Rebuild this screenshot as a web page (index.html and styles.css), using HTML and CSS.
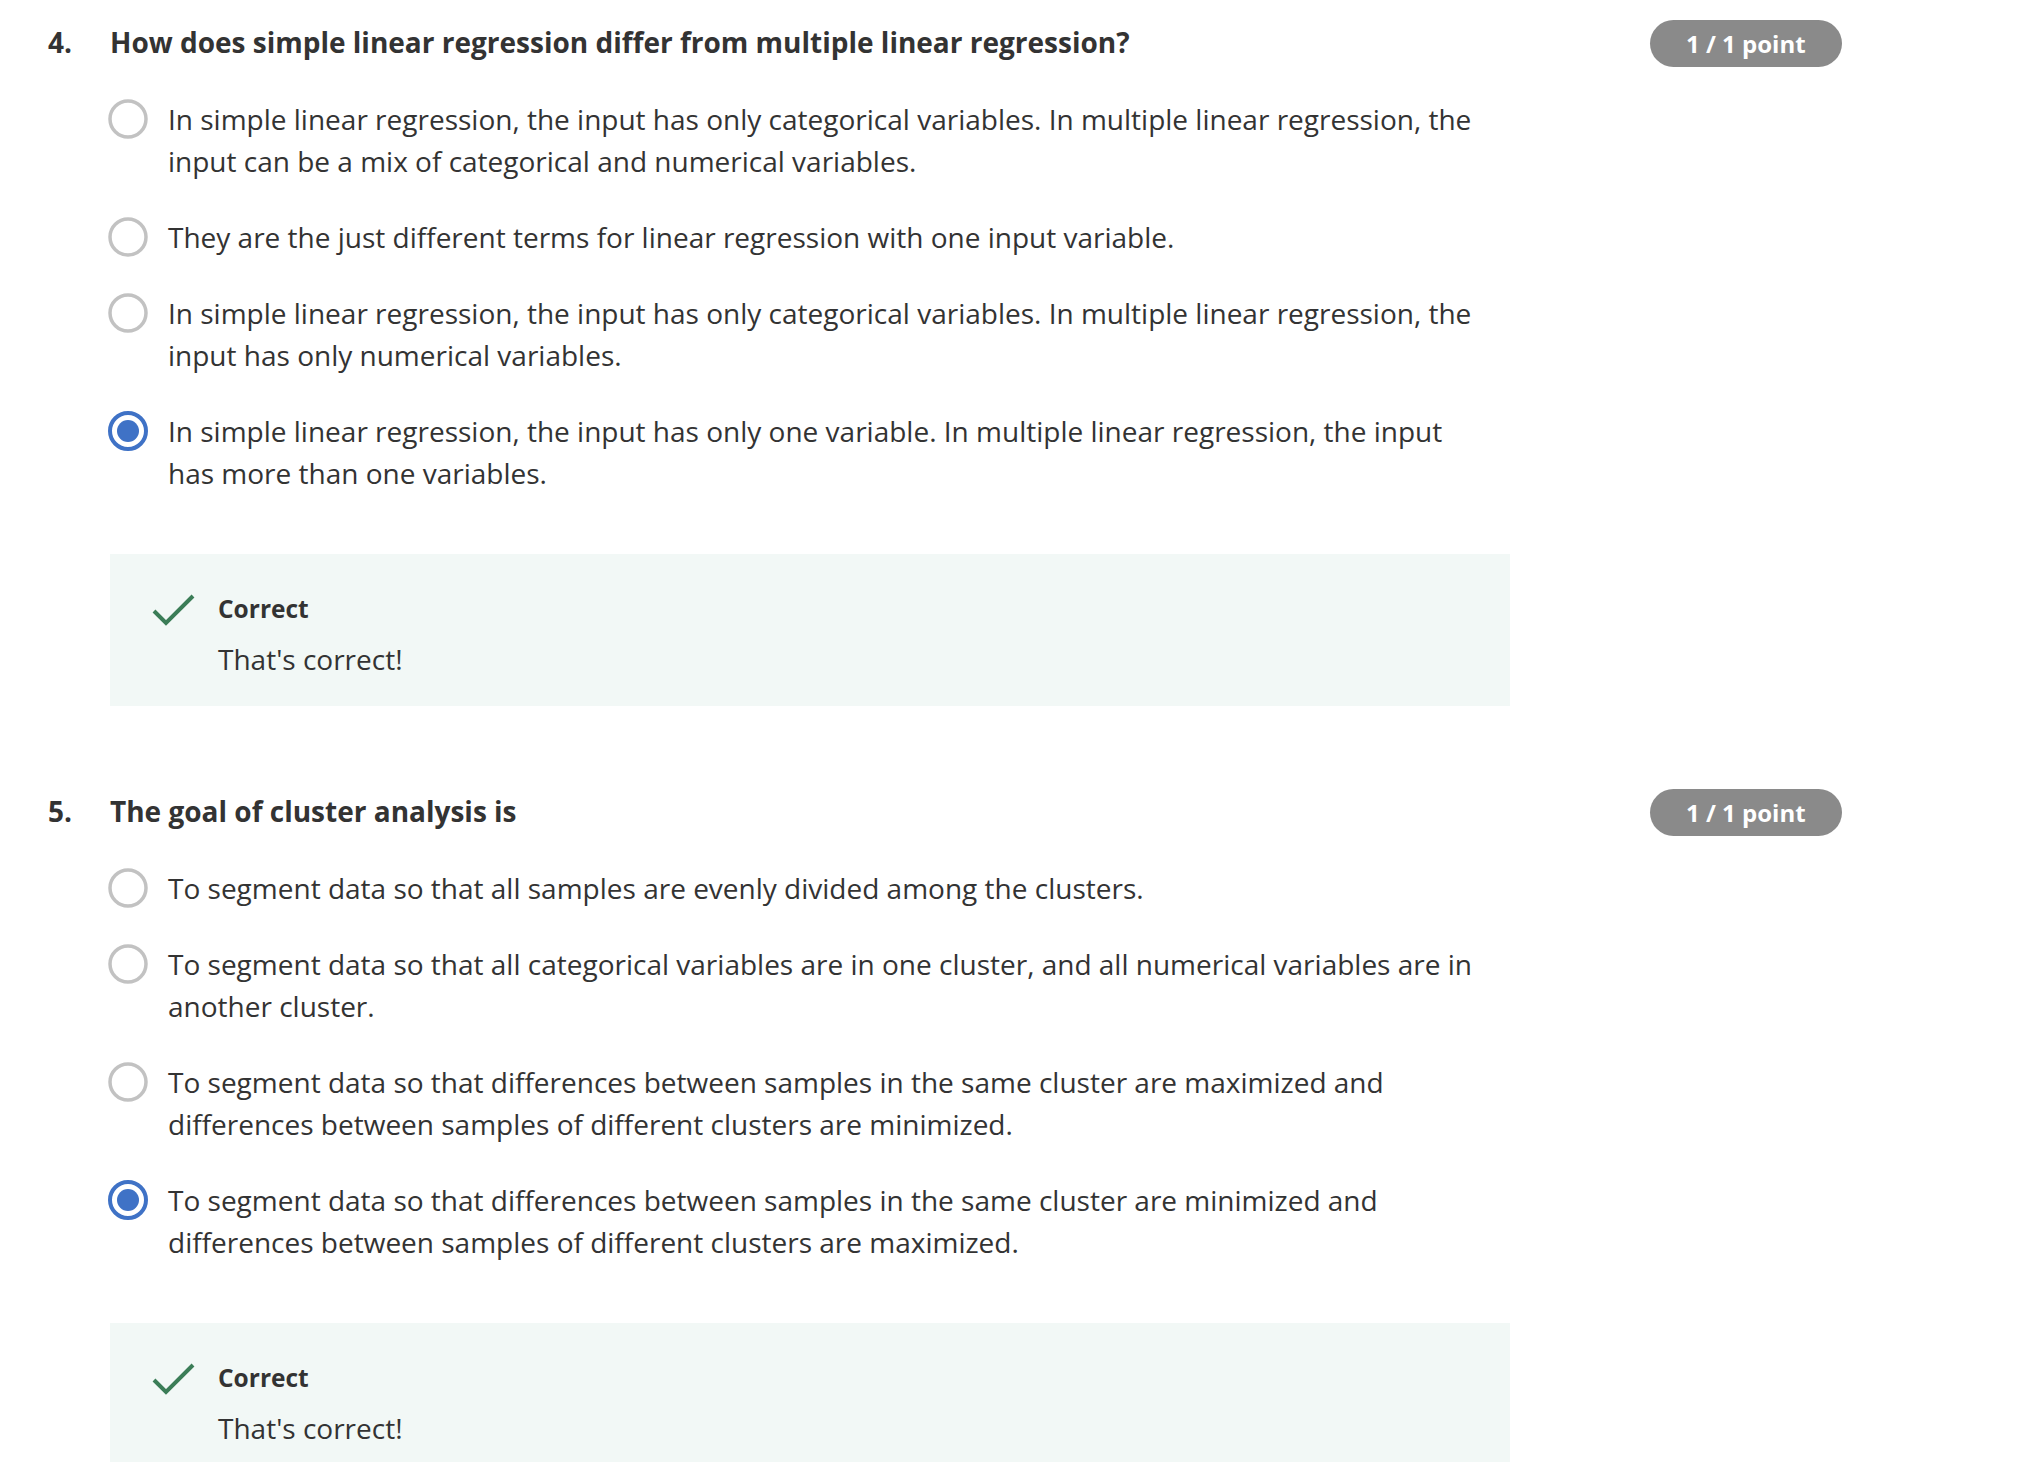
FILE: index.html
```html
<!DOCTYPE html>
<html lang="en">
<head>
<meta charset="utf-8">
<title>Quiz</title>
<link rel="stylesheet" href="styles.css">
</head>
<body>
<main class="quiz">
  <section class="question">
    <div class="q-num">4.</div>
    <div class="q-body">
      <h3 class="q-title">How does simple linear regression differ from multiple linear regression?</h3>
      <ul class="options">
        <li class="option">
          <svg class="radio" width="40" height="40" viewBox="0 0 40 40"><circle cx="20" cy="20" r="18" fill="none" stroke="#c2c2c2" stroke-width="3.5"/></svg>
          <span class="opt-text">In simple linear regression, the input has only categorical variables. In multiple linear regression, the input can be a mix of categorical and numerical variables.</span>
        </li>
        <li class="option">
          <svg class="radio" width="40" height="40" viewBox="0 0 40 40"><circle cx="20" cy="20" r="18" fill="none" stroke="#c2c2c2" stroke-width="3.5"/></svg>
          <span class="opt-text">They are the just different terms for linear regression with one input variable.</span>
        </li>
        <li class="option">
          <svg class="radio" width="40" height="40" viewBox="0 0 40 40"><circle cx="20" cy="20" r="18" fill="none" stroke="#c2c2c2" stroke-width="3.5"/></svg>
          <span class="opt-text">In simple linear regression, the input has only categorical variables. In multiple linear regression, the input has only numerical variables.</span>
        </li>
        <li class="option">
          <svg class="radio" width="40" height="40" viewBox="0 0 40 40"><circle cx="20" cy="20" r="18" fill="none" stroke="#3f72c6" stroke-width="4"/><circle cx="20" cy="20" r="11" fill="#3f72c6"/></svg>
          <span class="opt-text">In simple linear regression, the input has only one variable. In multiple linear regression, the input has more than one variables.</span>
        </li>
      </ul>
      <div class="feedback">
        <svg class="check" width="44" height="40" viewBox="0 0 44 40"><polyline points="2,20 14,32 41,5" fill="none" stroke="#3b7d57" stroke-width="4"/></svg>
        <div class="fb-text">
          <div class="fb-title">Correct</div>
          <div class="fb-msg">That's correct!</div>
        </div>
      </div>
    </div>
    <div class="points">1 / 1 point</div>
  </section>

  <section class="question">
    <div class="q-num">5.</div>
    <div class="q-body">
      <h3 class="q-title">The goal of cluster analysis is</h3>
      <ul class="options">
        <li class="option">
          <svg class="radio" width="40" height="40" viewBox="0 0 40 40"><circle cx="20" cy="20" r="18" fill="none" stroke="#c2c2c2" stroke-width="3.5"/></svg>
          <span class="opt-text">To segment data so that all samples are evenly divided among the clusters.</span>
        </li>
        <li class="option">
          <svg class="radio" width="40" height="40" viewBox="0 0 40 40"><circle cx="20" cy="20" r="18" fill="none" stroke="#c2c2c2" stroke-width="3.5"/></svg>
          <span class="opt-text">To segment data so that all categorical variables are in one cluster, and all numerical variables are in another cluster.</span>
        </li>
        <li class="option">
          <svg class="radio" width="40" height="40" viewBox="0 0 40 40"><circle cx="20" cy="20" r="18" fill="none" stroke="#c2c2c2" stroke-width="3.5"/></svg>
          <span class="opt-text">To segment data so that differences between samples in the same cluster are maximized and differences between samples of different clusters are minimized.</span>
        </li>
        <li class="option">
          <svg class="radio" width="40" height="40" viewBox="0 0 40 40"><circle cx="20" cy="20" r="18" fill="none" stroke="#3f72c6" stroke-width="4"/><circle cx="20" cy="20" r="11" fill="#3f72c6"/></svg>
          <span class="opt-text">To segment data so that differences between samples in the same cluster are minimized and differences between samples of different clusters are maximized.</span>
        </li>
      </ul>
      <div class="feedback">
        <svg class="check" width="44" height="40" viewBox="0 0 44 40"><polyline points="2,20 14,32 41,5" fill="none" stroke="#3b7d57" stroke-width="4"/></svg>
        <div class="fb-text">
          <div class="fb-title">Correct</div>
          <div class="fb-msg">That's correct!</div>
        </div>
      </div>
    </div>
    <div class="points">1 / 1 point</div>
  </section>
</main>
</body>
</html>
```

FILE: styles.css
```css
html, body {
  margin: 0;
  padding: 0;
  background: #ffffff;
}

body {
  font-family: "Open Sans", "Noto Sans", sans-serif;
  color: #333333;
  font-size: 28px;
  line-height: 42px;
}

.quiz {
  padding: 21px 0 0 48px;
  display: flex;
  flex-direction: column;
  gap: 84px;
}

.question {
  display: flex;
  align-items: flex-start;
}

.q-num {
  width: 62px;
  flex: none;
  font-weight: 700;
}

.q-body {
  width: 1400px;
  flex: none;
}

.q-title {
  margin: 0;
  font-size: 28px;
  line-height: 42px;
  font-weight: 700;
}

.options {
  list-style: none;
  margin: 35px 0 0 -2px;
  padding: 0;
  display: flex;
  flex-direction: column;
  gap: 34px;
}

.option {
  display: flex;
  align-items: flex-start;
  gap: 20px;
  padding-right: 26px;
}

.radio {
  flex: none;
  margin-top: 1px;
}

.opt-text {
  flex: 1;
}

.feedback {
  margin-top: 60px;
  background: #f2f8f6;
  display: flex;
  align-items: flex-start;
  padding: 37px 0 26px 42px;
}

.check {
  flex: none;
  width: 44px;
}

.fb-text {
  margin-left: 22px;
}

.fb-title {
  font-weight: 700;
  font-size: 24.5px;
  line-height: 35px;
  margin-bottom: 12px;
}

.fb-msg {
  font-size: 28px;
  line-height: 42px;
}

.points {
  flex: none;
  margin-left: 140px;
  margin-top: -1px;
  height: 47px;
  line-height: 47px;
  padding: 0 36px;
  border-radius: 24px;
  background: #8a8a8a;
  color: #ffffff;
  font-weight: 700;
  font-size: 24px;
  white-space: nowrap;
}
```
